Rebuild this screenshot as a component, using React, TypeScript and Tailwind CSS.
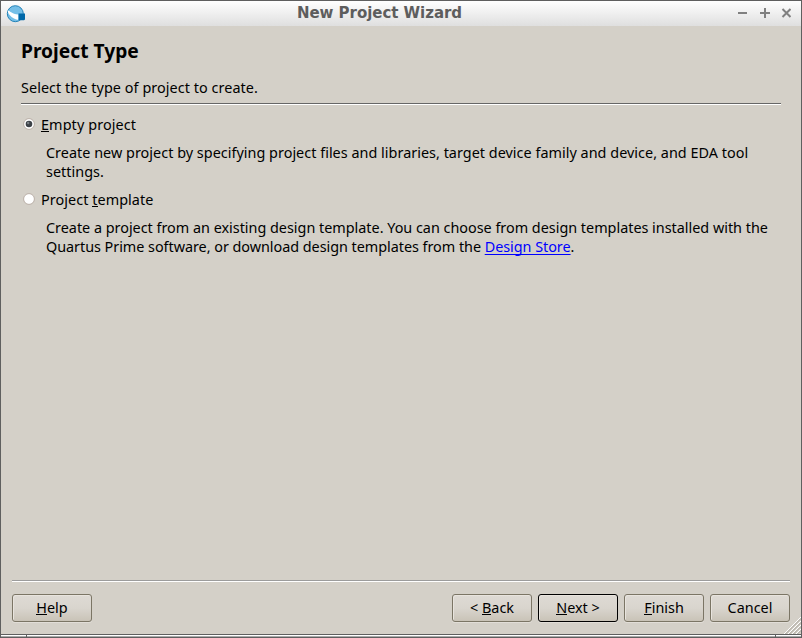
import React from 'react';

function Mnemonic({ children }: { children: React.ReactNode }) {
  return <span className="inline-block h-[17px] border-b border-black leading-[19px]">{children}</span>;
}

function Radio({ checked = false }: { checked?: boolean }) {
  return (
    <svg className="block h-3 w-3 shrink-0" viewBox="0 0 12 12" role="radio" aria-checked={checked}>
      <circle cx="6" cy="6" r="5.4" fill="#fff" stroke="#b9aea6" strokeWidth="1" />
      {checked && (
        <>
          <circle cx="6" cy="6" r="3.3" fill="#3d4248" />
          <circle cx="5.2" cy="5" r="1.2" fill="#7b8186" />
        </>
      )}
    </svg>
  );
}

function WizardButton({ children, primary = false }: { children: React.ReactNode; primary?: boolean }) {
  return (
    <button
      className={
        'flex h-7 w-20 items-start justify-center whitespace-pre rounded-[3px] border bg-linear-to-b from-[#dedad4] via-[#d9d5ce] to-[#c9c3b7] pt-[3px] leading-[19px] shadow-[inset_1px_1px_0_#e8e4de,0_1px_0_#e2ded8] ' +
        (primary ? 'border-black' : 'border-[#7b7565]')
      }
    >
      {children}
    </button>
  );
}

export default function App() {
  return (
    <div className="flex h-[638px] w-[802px] flex-col overflow-hidden border border-[#5f5f5f] bg-[#d4d0c8] font-['Noto_Sans',sans-serif] text-[14.4px] leading-[19px] text-black">
      <header className="flex h-[25px] shrink-0 items-center bg-linear-to-b from-white to-[#dfdfdf] pl-[5px] pr-[10px]">
        <svg className="h-[18px] w-[20px]" viewBox="0 0 20 18">
          <circle cx="9.300" cy="8.700" r="8" fill="#75bfe8" stroke="#2383b8" strokeWidth="1" />
          <path d="M1.600 5.500C3.500 5 5 9 12.500 9.500V14.500C11 15 9.500 14.500 8 13.500 4.500 11.500 2 9 1.600 5.500Z" fill="#fff" />
          <path d="M12.500 8.500h6.500v6l-1 .7h-5.500Z" fill="#0068a8" />
        </svg>
        <h1 className="h-[23px] flex-1 pr-[4px] text-center font-['DejaVu_Sans',sans-serif] text-[15px] font-bold leading-[23px] tracking-[-0.04px] text-[#5d5d5d]">
          New Project Wizard
        </h1>
        <svg className="h-[11px] w-[54px]" viewBox="0 0 54 11" fill="none" stroke="#808080" strokeWidth="2">
          <path d="M1 5h9M23 5h10M28 0v10" />
          <path d="m45.500 1 8 8m0-8-8 8" />
        </svg>
      </header>
      <main className="flex flex-1 flex-col">
        <section className="pl-5 pr-5 pt-[13px]">
          <h2 className="text-[19.2px] font-bold leading-6">Project Type</h2>
          <p className="mt-[15px] tracking-[0.06px]">Select the type of project to create.</p>
          <div className="mt-[6px] h-[2px] border-b border-t border-b-white border-t-[#666]" />
        </section>
        <section className="pl-[22px] pr-5 pt-[10px]">
          <div className="flex items-start gap-[6px]">
            <div className="pt-[3px]"><Radio checked /></div>
            <span className="h-[19px] whitespace-nowrap tracking-[0.1px]"><Mnemonic>E</Mnemonic>mpty project</span>
          </div>
          <p className="ml-[23px] mt-[9px] whitespace-nowrap tracking-[0.025px]">
            Create new project by specifying project files and libraries, target device family and device, and EDA tool<br />settings.
          </p>
          <div className="mt-[9px] flex items-start gap-[6px]">
            <div className="pt-[3px]"><Radio /></div>
            <span className="h-[19px] whitespace-nowrap tracking-[0.06px]">Project <Mnemonic>t</Mnemonic>emplate</span>
          </div>
          <p className="ml-[23px] mt-[9px] whitespace-nowrap tracking-[-0.01px]">
            Create a project from an existing design template. You can choose from design templates installed with the<br /><span className="tracking-[-0.035px]">Quartus Prime software, or download design templates from the <a className="text-[#0000ff] underline decoration-1 underline-offset-2 [text-decoration-skip-ink:none]">Design Store</a>.</span>
          </p>
        </section>
      </main>
      <footer className="shrink-0">
        <div className="ml-[11px] mr-[11px] h-[2px] border-b border-t border-b-white border-t-[#9c9c9c]" />
        <div className="flex h-[52px] items-start gap-[6px] px-[11px] pt-3">
          <WizardButton><Mnemonic>H</Mnemonic>elp</WizardButton>
          <div className="flex-1" />
          <WizardButton>{'< '}<Mnemonic>B</Mnemonic>ack</WizardButton>
          <WizardButton primary><Mnemonic>N</Mnemonic>{'ext >'}</WizardButton>
          <WizardButton><Mnemonic>F</Mnemonic>inish</WizardButton>
          <WizardButton>Cancel</WizardButton>
        </div>
        <div className="flex h-[3px] border-t border-[#5f5f5f] bg-[#aaa]">
          <i className="w-[25px] border-t border-white" />
          <i className="w-px bg-[#5f5f5f]" />
          <i className="flex-1 border-t border-white" />
          <i className="w-px bg-[#5f5f5f]" />
          <i className="w-[25px] border-t border-white" />
        </div>
      </footer>
      <svg className="absolute left-[784px] top-[617px] h-[17px] w-[17px]" viewBox="0 0 17 17" fill="none">
        <path d="M0 17 17 0M4 17 17 4M8 17 17 8M12 17 17 12" stroke="#fff" />
        <path d="M1.500 17 17 1.500M5.500 17 17 5.500M9.500 17 17 9.500M13.500 17 17 13.500" stroke="#aaa59c" />
      </svg>
    </div>
  );
}
